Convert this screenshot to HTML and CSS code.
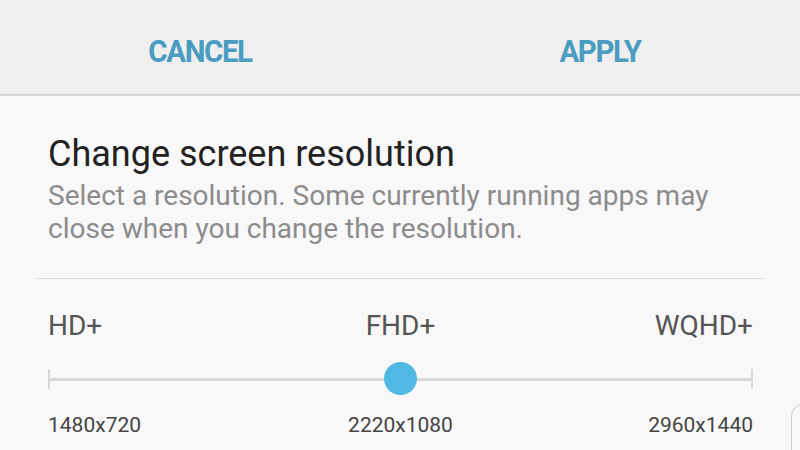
FILE: index.html
```html
<!DOCTYPE html>
<html lang="en">
<head>
  <meta charset="UTF-8">
  <title>Screen resolution</title>
  <link rel="stylesheet" href="styles.css">
</head>
<body>

  <div class="barra">
    <button class="acao">CANCEL</button>
    <button class="acao">APPLY</button>
  </div>

  <div class="conteudo">
    <h1>Change screen resolution</h1>
    <p class="descricao">Select a resolution. Some currently running apps may close when you change the resolution.</p>

    <hr class="divisor">

    <div class="resolucoes">
      <div class="nomes">
        <span>HD+</span>
        <span>FHD+</span>
        <span>WQHD+</span>
      </div>

      <div class="slider">
        <span class="marca"></span>
        <span class="trilho"></span>
        <span class="marca"></span>
        <span class="bolinha"></span>
      </div>

      <div class="valores">
        <span>1480x720</span>
        <span>2220x1080</span>
        <span>2960x1440</span>
      </div>
    </div>
  </div>

  <div class="canto"></div>

</body>
</html>
```

FILE: styles.css
```css
html, body {
  height: 450px;
  overflow: hidden;
}

body {
  font-family: Roboto, 'Noto Sans', sans-serif;
  margin: 0;
  background-color: #f8f8f8;
  position: relative;
}

.barra {
  display: grid;
  grid-template-columns: 1fr 1fr;
  height: 94px;
  background-color: #efefef;
  border-bottom: 2px solid #d6d6d6;
}

.acao {
  background: none;
  border: none;
  font-family: Roboto, sans-serif;
  font-weight: bold;
  font-size: 32px;
  letter-spacing: -1.5px;
  color: #4a9cc0;
  padding: 0;
  margin-top: 8px;
  transform: scaleX(0.92);
}

.conteudo {
  padding: 36px 35px 0;
}

h1 {
  margin: 0 13px;
  font-weight: normal;
  font-size: 36px;
  line-height: 44px;
  color: #222;
}

.descricao {
  margin: 3px 13px 0;
  font-size: 28px;
  line-height: 33px;
  color: #8c8c8c;
  max-width: 700px;
}

.divisor {
  border: none;
  border-top: 1px solid #dcdcdc;
  margin: 33px 0 0;
}

.resolucoes {
  padding: 0 12px 0 13px;
}

.nomes, .valores {
  display: grid;
  grid-template-columns: 1fr auto 1fr;
}

.nomes span:last-child, .valores span:last-child {
  text-align: right;
}

.nomes {
  margin-top: 32px;
  font-size: 28px;
  line-height: 30px;
  color: #555;
}

.slider {
  position: relative;
  display: flex;
  align-items: center;
  height: 34px;
  margin-top: 21px;
}

.trilho {
  flex: 1;
  height: 3px;
  background-color: #d8d8d8;
}

.marca {
  width: 2px;
  height: 20px;
  background-color: #d8d8d8;
}

.bolinha {
  position: absolute;
  left: 50%;
  top: 50%;
  width: 33px;
  height: 33px;
  margin: -17px 0 0 -17px;
  border-radius: 50%;
  background-color: #4fb8e3;
}

.valores {
  margin-top: 16px;
  font-size: 21px;
  line-height: 26px;
  color: #444;
}

/* ponta do proximo cartao, cortada pela borda da tela */
.canto {
  position: absolute;
  left: 791px;
  top: 404px;
  width: 40px;
  height: 60px;
  border: 1px solid #cfcfcf;
  border-radius: 12px;
}
```
